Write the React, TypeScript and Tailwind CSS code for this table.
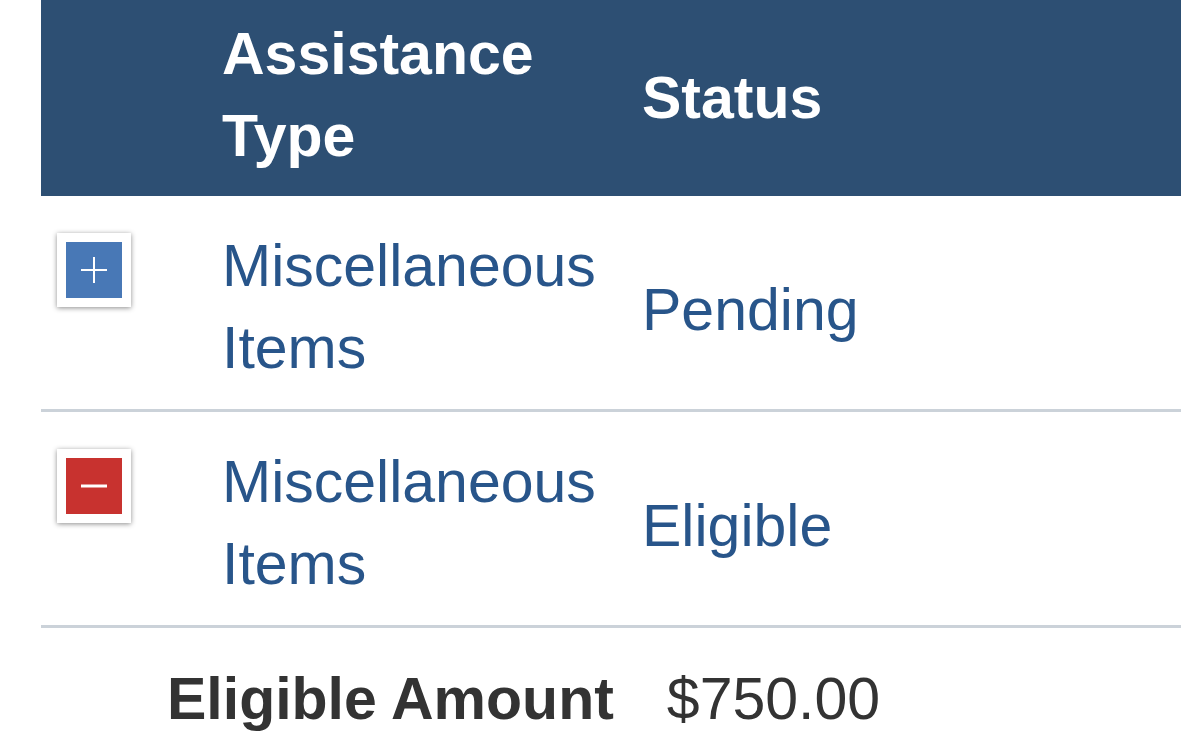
import React from "react";

const font = { fontFamily: '"Liberation Sans", Arial, Helvetica, sans-serif' };

function ToggleBox({ open }: { open: boolean }) {
  return (
    <div className="w-[74px] h-[74px] bg-white p-[9px] shadow-[0_1px_5px_rgba(0,0,0,0.45)]">
      <div
        className={`w-full h-full flex items-center justify-center ${
          open ? "bg-[#c8322f]" : "bg-[#4878b6]"
        }`}
      >
        <svg width="30" height="30" viewBox="0 0 30 30">
          <line x1="2" y1="15" x2="28" y2="15" stroke="#fff" strokeWidth={open ? 3 : 2} />
          {!open && <line x1="15" y1="2" x2="15" y2="28" stroke="#fff" strokeWidth="2" />}
        </svg>
      </div>
    </div>
  );
}

function Row({ open, status }: { open: boolean; status: string }) {
  return (
    <div className="grid grid-cols-[165px_420px_1fr] border-b-[3px] border-[#cbd2d9]">
      <div className="pl-[16px] pt-[37px]">
        <ToggleBox open={open} />
      </div>
      <div className="pl-[16px] pr-[16px] pt-[29px] pb-[20px] text-[59px] leading-[82px] text-[#28558a]">
        Miscellaneous Items
      </div>
      <div className="pl-[16px] flex items-center pt-[14px] text-[59px] leading-[82px] text-[#28558a]">
        {status}
      </div>
    </div>
  );
}

export default function App() {
  return (
    <div className="w-[1187px] h-[748px] bg-white overflow-hidden" style={font}>
      <div className="ml-[41px] w-[1140px]">
        <div className="grid grid-cols-[165px_420px_1fr] bg-[#2d4f73] text-white font-bold text-[59px] leading-[82px]">
          <div />
          <div className="pl-[16px] pr-[16px] pt-[13px] pb-[19px]">Assistance Type</div>
          <div className="pl-[16px] flex items-center">Status</div>
        </div>
        <Row open={false} status="Pending" />
        <Row open={true} status="Eligible" />
        <div className="flex pt-[30px] text-[59px] leading-[82px] text-[#333333]">
          <div className="pl-[126px] font-bold">Eligible Amount</div>
          <div className="pl-[53px]">$750.00</div>
        </div>
      </div>
    </div>
  );
}
